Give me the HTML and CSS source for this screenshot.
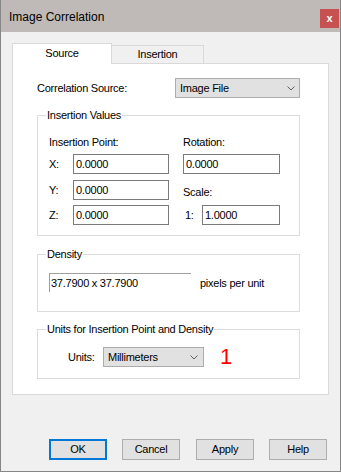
FILE: index.html
```html
<!DOCTYPE html>
<html lang="en">
  <head>
    <meta charset="UTF-8" />
    <title>Image Correlation</title>
    <link rel="stylesheet" href="styles.css">
  </head>
  <body>
    <div class="window">
      <div class="titlebar">
        <span class="title">Image Correlation</span>
        <span class="close">x</span>
      </div>

      <div class="client">
        <div class="tabs">
          <div class="tab active">Source</div>
          <div class="tab">Insertion</div>
        </div>

        <div class="panel">
          <div class="source-row">
            <span class="source-label">Correlation Source:</span>
            <div class="combo source-combo">
              <span>Image File</span>
              <svg class="chevron" width="8" height="5" viewBox="0 0 8 5"><polyline points="0.5,0.5 4,4 7.5,0.5" /></svg>
            </div>
          </div>

          <div class="group group-insert">
            <span class="legend">Insertion Values</span>
            <div class="iv-grid">
              <span class="iv-head">Insertion Point:</span>
              <span>Rotation:</span>

              <span>X:</span>
              <div class="edit">0.0000</div>
              <div class="edit">0.0000</div>

              <span>Y:</span>
              <div class="edit row-y">0.0000</div>
              <span class="row-y scale-label">Scale:</span>

              <span>Z:</span>
              <div class="edit">0.0000</div>
              <div class="scale-cell">
                <span class="one">1:</span>
                <div class="edit scale-edit">1.0000</div>
              </div>
            </div>
          </div>

          <div class="group group-density">
            <span class="legend">Density</span>
            <div class="density-row">
              <div class="static-field">37.7900 x 37.7900</div>
              <span class="density-unit">pixels per unit</span>
            </div>
          </div>

          <div class="group group-units">
            <span class="legend">Units for Insertion Point and Density</span>
            <div class="units-row">
              <span class="units-label">Units:</span>
              <div class="combo units-combo">
                <span>Millimeters</span>
                <svg class="chevron" width="8" height="5" viewBox="0 0 8 5"><polyline points="0.5,0.5 4,4 7.5,0.5" /></svg>
              </div>
              <span class="marker">1</span>
            </div>
          </div>
        </div>

        <div class="buttons">
          <div class="btn default">OK</div>
          <div class="btn">Cancel</div>
          <div class="btn apply">Apply</div>
          <div class="btn">Help</div>
        </div>
      </div>
    </div>
  </body>
</html>
```

FILE: styles.css
```css
body {
  margin: 0;
  font-family: "Liberation Sans", Arial, sans-serif;
  font-size: 11px;
  letter-spacing: -0.25px;
  color: #000;
}

.window {
  width: 341px;
  height: 472px;
  box-sizing: border-box;
  border: 1px solid #868686;
  border-top: 0;
  background: #f0f0f0;
}

.titlebar {
  height: 32px;
  display: flex;
  align-items: center;
  background: #bfbab7;
  padding-left: 8px;
}

.title {
  flex: 1;
  font-size: 12px;
  letter-spacing: 0;
  padding-top: 1px;
}

.close {
  width: 19px;
  height: 19px;
  margin-right: 1px;
  margin-top: 4px;
  background: #c75050;
  color: #fff;
  font-weight: bold;
  font-size: 11px;
  letter-spacing: 0;
  text-align: center;
  line-height: 18px;
}

.client {
  padding: 11px 0 0 11px;
}

/* tabs */
.tabs {
  display: flex;
  align-items: flex-end;
  line-height: 14px;
}

.tab {
  box-sizing: border-box;
  width: 92px;
  height: 18px;
  padding-top: 1px;
  border: 1px solid #d9d9d9;
  border-left: 0;
  border-bottom: 0;
  text-align: center;
}

.tab.active {
  position: relative;
  width: 100px;
  height: 21px;
  padding-top: 2px;
  margin-bottom: -1px;
  border-left: 1px solid #d9d9d9;
  background: #fff;
}

.panel {
  width: 317px;
  box-sizing: border-box;
  background: #fff;
  border: 1px solid #d9d9d9;
  padding: 14px 0 15px 24px;
  line-height: 14px;
}

/* controls */
.combo {
  box-sizing: border-box;
  height: 20px;
  display: flex;
  align-items: center;
  justify-content: space-between;
  padding: 0 4px 0 4px;
  background: #e1e1e1;
  border: 1px solid #adadad;
}

.chevron {
  fill: none;
  stroke: #606060;
  stroke-width: 1;
}

.edit {
  box-sizing: border-box;
  height: 20px;
  border: 1px solid #7a7a7a;
  background: #fff;
  padding-left: 2px;
  line-height: 18px;
}

.source-row {
  display: flex;
  align-items: center;
}

.source-label {
  width: 138px;
}

.source-combo {
  width: 125px;
}

/* group boxes */
.group {
  width: 263px;
  box-sizing: border-box;
  border: 1px solid #dcdcdc;
  padding-left: 11px;
}

.legend {
  display: block;
  width: fit-content;
  margin: -7px 0 0 -3px;
  padding: 0 1px;
  line-height: 13px;
  background: #fff;
}

.group-insert {
  margin-top: 17px;
  padding-bottom: 10px;
}

.iv-grid {
  margin-top: 13px;
  display: grid;
  grid-template-columns: 10px 96px 97px;
  grid-template-rows: 14px 20px 21px 20px;
  column-gap: 14px;
  row-gap: 5px;
  align-items: center;
}

.iv-head {
  grid-column: span 2;
}

.row-y {
  align-self: end;
}

.scale-label {
  margin-bottom: 1px;
}

.scale-cell {
  display: flex;
  align-items: center;
}

.one {
  margin-left: 2px;
}

.scale-edit {
  width: 78px;
  margin-left: auto;
}

.group-density {
  margin-top: 18px;
  padding-bottom: 19px;
}

.density-row {
  margin-top: 12px;
  display: flex;
  align-items: center;
}

.static-field {
  box-sizing: border-box;
  width: 142px;
  height: 19px;
  border-top: 1px solid #a0a0a0;
  border-left: 1px solid #a0a0a0;
  padding-left: 1px;
  line-height: 18px;
}

.density-unit {
  margin-left: 9px;
}

.group-units {
  margin-top: 17px;
  padding-left: 30px;
  padding-bottom: 11px;
}

.group-units .legend {
  margin-left: -22px;
}

.units-row {
  margin-top: 11px;
  display: flex;
  align-items: center;
}

.units-label {
  width: 35px;
}

.units-combo {
  width: 101px;
  padding-right: 5px;
}

.marker {
  margin-left: 16px;
  color: #f00;
  font-size: 22px;
  line-height: 20px;
  letter-spacing: 0;
}

/* dialog buttons */
.buttons {
  margin: 44px 0 0 37px;
  display: flex;
  gap: 15px;
}

.btn {
  box-sizing: border-box;
  width: 58px;
  height: 21px;
  background: #e1e1e1;
  border: 1px solid #adadad;
  text-align: center;
  line-height: 19px;
}

.btn.default {
  border: 2px solid #0078d7;
  line-height: 17px;
}

.btn.apply {
  margin-left: 1px;
}
```
